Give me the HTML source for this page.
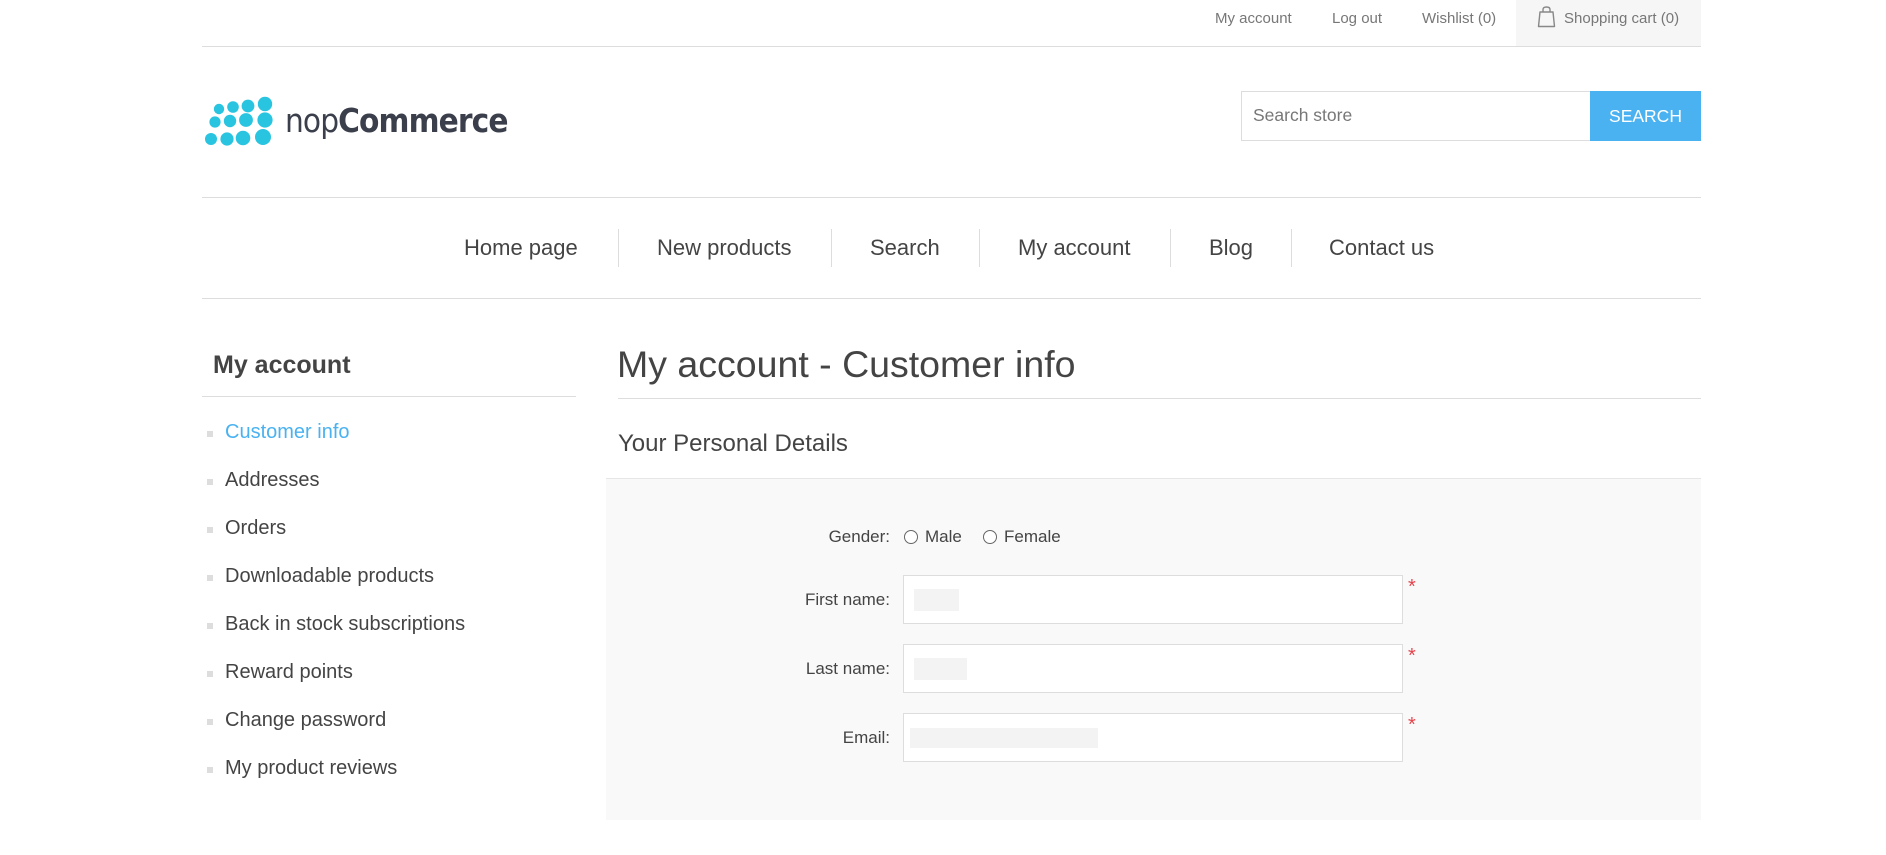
<!DOCTYPE html>
<html><head><meta charset="utf-8"><style>
*{margin:0;padding:0;box-sizing:border-box}
body{width:1886px;height:855px;background:#fff;font-family:"Liberation Sans",Arial,sans-serif;color:#444;position:relative;overflow:hidden}
.a{position:absolute;white-space:nowrap}
.hl{font-size:15px;color:#777;top:10px}
.nav{font-size:22px;color:#444;top:235px}
.sep{position:absolute;top:229px;width:1px;height:38px;background:#ddd}
.li{position:absolute;left:225px;font-size:20px;color:#444}
.bul{position:absolute;left:207px;width:6px;height:6px;background:#ddd}
.lab{position:absolute;right:996px;font-size:17px;color:#444}
.inp{position:absolute;left:903px;width:500px;height:49px;background:#fff;border:1px solid #ddd}
.ph{position:absolute;background:#f3f3f3;height:22px}
.star{position:absolute;left:1408px;color:#e4444c;font-size:20px}
</style></head><body>
<div class="a" style="left:1516px;top:0;width:185px;height:46px;background:#f6f6f6"></div>
<div class="a hl" style="left:1215px">My account</div>
<div class="a hl" style="left:1332px">Log out</div>
<div class="a hl" style="left:1422px">Wishlist (0)</div>
<svg class="a" style="left:1537px;top:6px" width="19" height="22" viewBox="0 0 19 22"><path d="M6 6V3.5Q6 1 9.5 1Q13 1 13 3.5V6M3 6H16L17.5 20.5H1.5Z" fill="none" stroke="#888" stroke-width="1.4" stroke-linejoin="round"/></svg>
<div class="a hl" style="left:1564px">Shopping cart (0)</div>
<div class="a" style="left:202px;top:46px;width:1499px;height:1px;background:#ddd"></div>

<svg class="a" style="left:200px;top:92px" width="80" height="60" viewBox="200 92 80 60">
<g fill="#28c4e0">
<circle cx="219" cy="109" r="5.2"/><circle cx="233" cy="107" r="5.8"/><circle cx="248" cy="106" r="6.4"/><circle cx="265" cy="104" r="7.2"/>
<circle cx="215" cy="122" r="5.6"/><circle cx="230" cy="121" r="6.2"/><circle cx="246" cy="120" r="6.9"/><circle cx="265" cy="120" r="7.6"/>
<circle cx="211" cy="139" r="6"/><circle cx="227" cy="139" r="6.6"/><circle cx="243" cy="138" r="7.3"/><circle cx="263" cy="137" r="8"/>
</g></svg>
<div class="a" style="left:285px;top:101px;font-size:33px;color:#3a3f4b;letter-spacing:-1px;font-family:'DejaVu Sans','Liberation Sans',sans-serif;transform:scaleX(0.9);transform-origin:left">nop<b>Commerce</b></div>

<div class="a" style="left:1241px;top:91px;width:350px;height:50px;border:1px solid #ddd;background:#fff"></div>
<div class="a" style="left:1253px;top:105px;font-size:17.5px;color:#777">Search store</div>
<div class="a" style="left:1590px;top:91px;width:111px;height:50px;background:#4ab2f1;color:#fff;font-size:17.5px;text-align:center;line-height:50px">SEARCH</div>
<div class="a" style="left:202px;top:197px;width:1499px;height:1px;background:#ddd"></div>

<div class="a nav" style="left:464px">Home page</div>
<div class="sep" style="left:618px"></div>
<div class="a nav" style="left:657px">New products</div>
<div class="sep" style="left:831px"></div>
<div class="a nav" style="left:870px">Search</div>
<div class="sep" style="left:979px"></div>
<div class="a nav" style="left:1018px">My account</div>
<div class="sep" style="left:1170px"></div>
<div class="a nav" style="left:1209px">Blog</div>
<div class="sep" style="left:1291px"></div>
<div class="a nav" style="left:1329px">Contact us</div>
<div class="a" style="left:202px;top:298px;width:1499px;height:1px;background:#ddd"></div>

<div class="a" style="left:213px;top:351px;font-size:25px;font-weight:bold;color:#444">My account</div>
<div class="a" style="left:202px;top:396px;width:374px;height:1px;background:#ddd"></div>
<div class="bul" style="top:431px"></div><div class="li" style="top:421px;color:#4ab2f1">Customer info</div>
<div class="bul" style="top:479px"></div><div class="li" style="top:469px">Addresses</div>
<div class="bul" style="top:527px"></div><div class="li" style="top:517px">Orders</div>
<div class="bul" style="top:575px"></div><div class="li" style="top:565px">Downloadable products</div>
<div class="bul" style="top:623px"></div><div class="li" style="top:613px">Back in stock subscriptions</div>
<div class="bul" style="top:671px"></div><div class="li" style="top:661px">Reward points</div>
<div class="bul" style="top:719px"></div><div class="li" style="top:709px">Change password</div>
<div class="bul" style="top:767px"></div><div class="li" style="top:757px">My product reviews</div>

<div class="a" style="left:617px;top:343px;font-size:37.5px;color:#444">My account - Customer info</div>
<div class="a" style="left:618px;top:398px;width:1083px;height:1px;background:#ddd"></div>
<div class="a" style="left:618px;top:430px;font-size:24px;color:#444">Your Personal Details</div>
<div class="a" style="left:606px;top:478px;width:1095px;height:342px;background:#f9f9f9;border-top:1px solid #e6e6e6"></div>

<div class="lab" style="top:527px">Gender:</div>
<div class="a" style="left:904px;top:530px;width:14px;height:14px;border:1px solid #666;border-radius:50%;background:#fff"></div>
<div class="a" style="left:925px;top:527px;font-size:17px">Male</div>
<div class="a" style="left:983px;top:530px;width:14px;height:14px;border:1px solid #666;border-radius:50%;background:#fff"></div>
<div class="a" style="left:1004px;top:527px;font-size:17px">Female</div>

<div class="lab" style="top:590px">First name:</div>
<div class="inp" style="top:575px"></div><div class="ph" style="left:914px;top:589px;width:45px"></div>
<div class="star" style="top:576px">*</div>
<div class="lab" style="top:659px">Last name:</div>
<div class="inp" style="top:644px"></div><div class="ph" style="left:914px;top:658px;width:53px"></div>
<div class="star" style="top:645px">*</div>
<div class="lab" style="top:728px">Email:</div>
<div class="inp" style="top:713px"></div><div class="ph" style="left:910px;top:728px;width:188px;height:20px"></div>
<div class="star" style="top:714px">*</div>
</body></html>
